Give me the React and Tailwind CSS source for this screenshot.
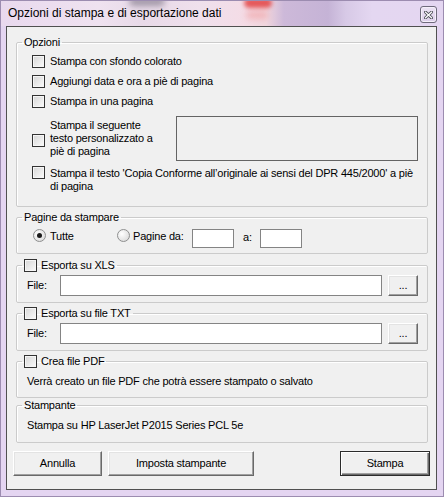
import React from "react";

const FONT = "font-['Liberation_Sans',Arial,sans-serif]";

function Check() {
  return (
    <span className="block w-[13px] h-[13px] shrink-0 border border-[#333333] bg-[linear-gradient(135deg,#d6d6d6,#fbfbfb)] shadow-[inset_0_0_0_1px_#f6f6f6]" />
  );
}

function Radio({ checked }) {
  return (
    <span className="flex w-[13px] h-[13px] shrink-0 items-center justify-center rounded-full border border-[#8e8f8f] bg-[radial-gradient(circle_at_35%_35%,#ffffff,#d4d4d4)]">
      {checked && <span className="block w-[5px] h-[5px] rounded-full bg-[#1b1b1b]" />}
    </span>
  );
}

function Btn({ children, className = "", def = false }) {
  return (
    <div
      className={`flex items-center justify-center bg-[#f0f0f0] ${
        def
          ? "border border-[#2b2b2b] shadow-[inset_1px_1px_0_#ffffff,inset_-1px_-1px_0_#696969,inset_-2px_-2px_0_#a0a0a0]"
          : "border-t border-l border-t-[#ffffff] border-l-[#ffffff] border-r border-b border-r-[#696969] border-b-[#696969] shadow-[inset_-1px_-1px_0_#a0a0a0,inset_1px_1px_0_#e3e3e3]"
      } ${className}`}
    >
      {children}
    </div>
  );
}

function Group({ legend, className = "", children }) {
  return (
    <fieldset
      className={`ml-[9px] w-[412px] border border-[#cbcbcb] rounded-[2px] shadow-[inset_1px_1px_0_#ffffff] ${className}`}
    >
      <legend className="ml-[5px] px-[2px] h-[13px] leading-[13px]">{legend}</legend>
      {children}
    </fieldset>
  );
}

function FileRow() {
  return (
    <div className="mt-[3px] flex items-center h-[21px] pl-[10px]">
      <span className="w-[33px]">File:</span>
      <div className="w-[322px] h-[21px] bg-white border border-[#848484]" />
      <Btn className="ml-[6px] w-[30px] h-[21px]">...</Btn>
    </div>
  );
}

export default function App() {
  return (
    <div
      className={`w-[444px] h-[497px] flex flex-col bg-[#e4d5f1] border border-[#9c8cb0] ${FONT} text-[11px] leading-[13px] tracking-[-0.2px] text-black`}
    >
      {/* Title bar */}
      <div className="relative h-[25px] shrink-0 flex items-start pl-[7px] pr-[6px] pt-[5px] overflow-hidden bg-[linear-gradient(90deg,#e9d9ee_0%,#efe2f0_22%,#e8dae8_32%,#efe0ec_45%,#f4dce6_55%,#f0d6de_60%,#cdb9d9_64%,#c5b3d6_74%,#d7c9e6_78%,#e4d7f1_84%,#e4d6f1_100%)]">
        <span className="pointer-events-none absolute left-[128px] top-[-4px] w-[36px] h-[9px] rounded-full bg-[#5a5566] opacity-50 blur-[3px]" />
        <span className="pointer-events-none absolute left-[243px] top-[-3px] w-[28px] h-[10px] rounded-full bg-[#e23a3a] opacity-80 blur-[2px]" />
        <span className="pointer-events-none absolute left-[245px] top-[10px] w-[22px] h-[8px] rounded-full bg-[#f08080] opacity-40 blur-[3px]" />
        <span className="relative text-[12px] leading-[15px] tracking-normal">Opzioni di stampa e di esportazione dati</span>
        <div className="relative ml-auto w-[17px] h-[17px] rounded-[3px] border border-[#6f6a7c] bg-[linear-gradient(180deg,#ece3f4,#dccfea)] shadow-[inset_0_0_0_1px_#f5effa] flex items-center justify-center">
          <svg width="9" height="8" viewBox="0 0 9 8">
            <path d="M1.5 1.2 L7.5 6.8 M7.5 1.2 L1.5 6.8" stroke="#4f4f5a" strokeWidth="3" strokeLinecap="square" />
            <path d="M1.5 1.2 L7.5 6.8 M7.5 1.2 L1.5 6.8" stroke="#ffffff" strokeWidth="1.2" strokeLinecap="square" />
          </svg>
        </div>
      </div>

      {/* Client area */}
      <div className="ml-[5px] mr-[6px] mb-[6px] flex-1 flex flex-col border border-[#505050] bg-[#f0f0f0] pt-[9px] pb-[13px]">
        <Group legend="Opzioni" className="h-[171px]">
          <div className="pl-[15px] pt-[6px] flex flex-col">
            <div className="flex items-center h-[13px]">
              <Check />
              <span className="ml-[5px] whitespace-nowrap">Stampa con sfondo colorato</span>
            </div>
            <div className="mt-[7px] flex items-center h-[13px]">
              <Check />
              <span className="ml-[5px] whitespace-nowrap">Aggiungi data e ora a piè di pagina</span>
            </div>
            <div className="mt-[7px] flex items-center h-[13px]">
              <Check />
              <span className="ml-[5px] whitespace-nowrap">Stampa in una pagina</span>
            </div>
            <div className="mt-[8px] flex items-center h-[45px]">
              <span className="mt-[4px]">
                <Check />
              </span>
              <span className="ml-[5px] w-[126px] whitespace-nowrap">
                Stampa il seguente
                <br />
                testo personalizzato a
                <br />
                piè di pagina
              </span>
              <div className="w-[242px] h-[45px] border border-[#646464] bg-[#f0f0f0]" />
            </div>
            <div className="mt-[5px] flex items-start">
              <Check />
              <span className="ml-[5px] mt-[1px] whitespace-nowrap">
                Stampa il testo 'Copia Conforme all’originale ai sensi del DPR 445/2000' a piè
                <br />
                di pagina
              </span>
            </div>
          </div>
        </Group>

        <Group legend="Pagine da stampare" className="mt-[4px] h-[43px]">
          <div className="mt-[5px] pl-[16px] flex items-start">
            <div className="w-[84px] flex items-start">
              <Radio checked />
              <span className="ml-[4px] mt-[1px]">Tutte</span>
            </div>
            <div className="w-[75px] flex items-start">
              <Radio />
              <span className="ml-[3px] mt-[1px] whitespace-nowrap">Pagine da:</span>
            </div>
            <div className="w-[42px] h-[19px] bg-white border border-[#848484]" />
            <span className="ml-[9px] w-[17px] mt-[2px]">a:</span>
            <div className="w-[42px] h-[19px] bg-white border border-[#848484]" />
          </div>
        </Group>

        <Group
          legend={
            <span className="flex items-center h-[13px]">
              <Check />
              <span className="ml-[4px]">Esporta su XLS</span>
            </span>
          }
          className="mt-[5px] h-[44px]"
        >
          <FileRow />
        </Group>

        <Group
          legend={
            <span className="flex items-center h-[13px]">
              <Check />
              <span className="ml-[4px]">Esporta su file TXT</span>
            </span>
          }
          className="mt-[4px] h-[44px]"
        >
          <FileRow />
        </Group>

        <Group
          legend={
            <span className="flex items-center h-[13px]">
              <Check />
              <span className="ml-[4px]">Crea file PDF</span>
            </span>
          }
          className="mt-[4px] h-[43px]"
        >
          <div className="mt-[7px] pl-[10px] whitespace-nowrap">
            Verrà creato un file PDF che potrà essere stampato o salvato
          </div>
        </Group>

        <Group legend="Stampante" className="mt-[1px] h-[44px]">
          <div className="mt-[7px] pl-[10px] whitespace-nowrap">Stampa su HP LaserJet P2015 Series PCL 5e</div>
        </Group>

        <div className="mt-[8px] flex pl-[6px] pr-[6px]">
          <Btn className="w-[89px] h-[25px]">Annulla</Btn>
          <Btn className="ml-[6px] w-[146px] h-[25px]">Imposta stampante</Btn>
          <Btn def className="ml-auto w-[90px] h-[25px]">Stampa</Btn>
        </div>
      </div>
    </div>
  );
}
